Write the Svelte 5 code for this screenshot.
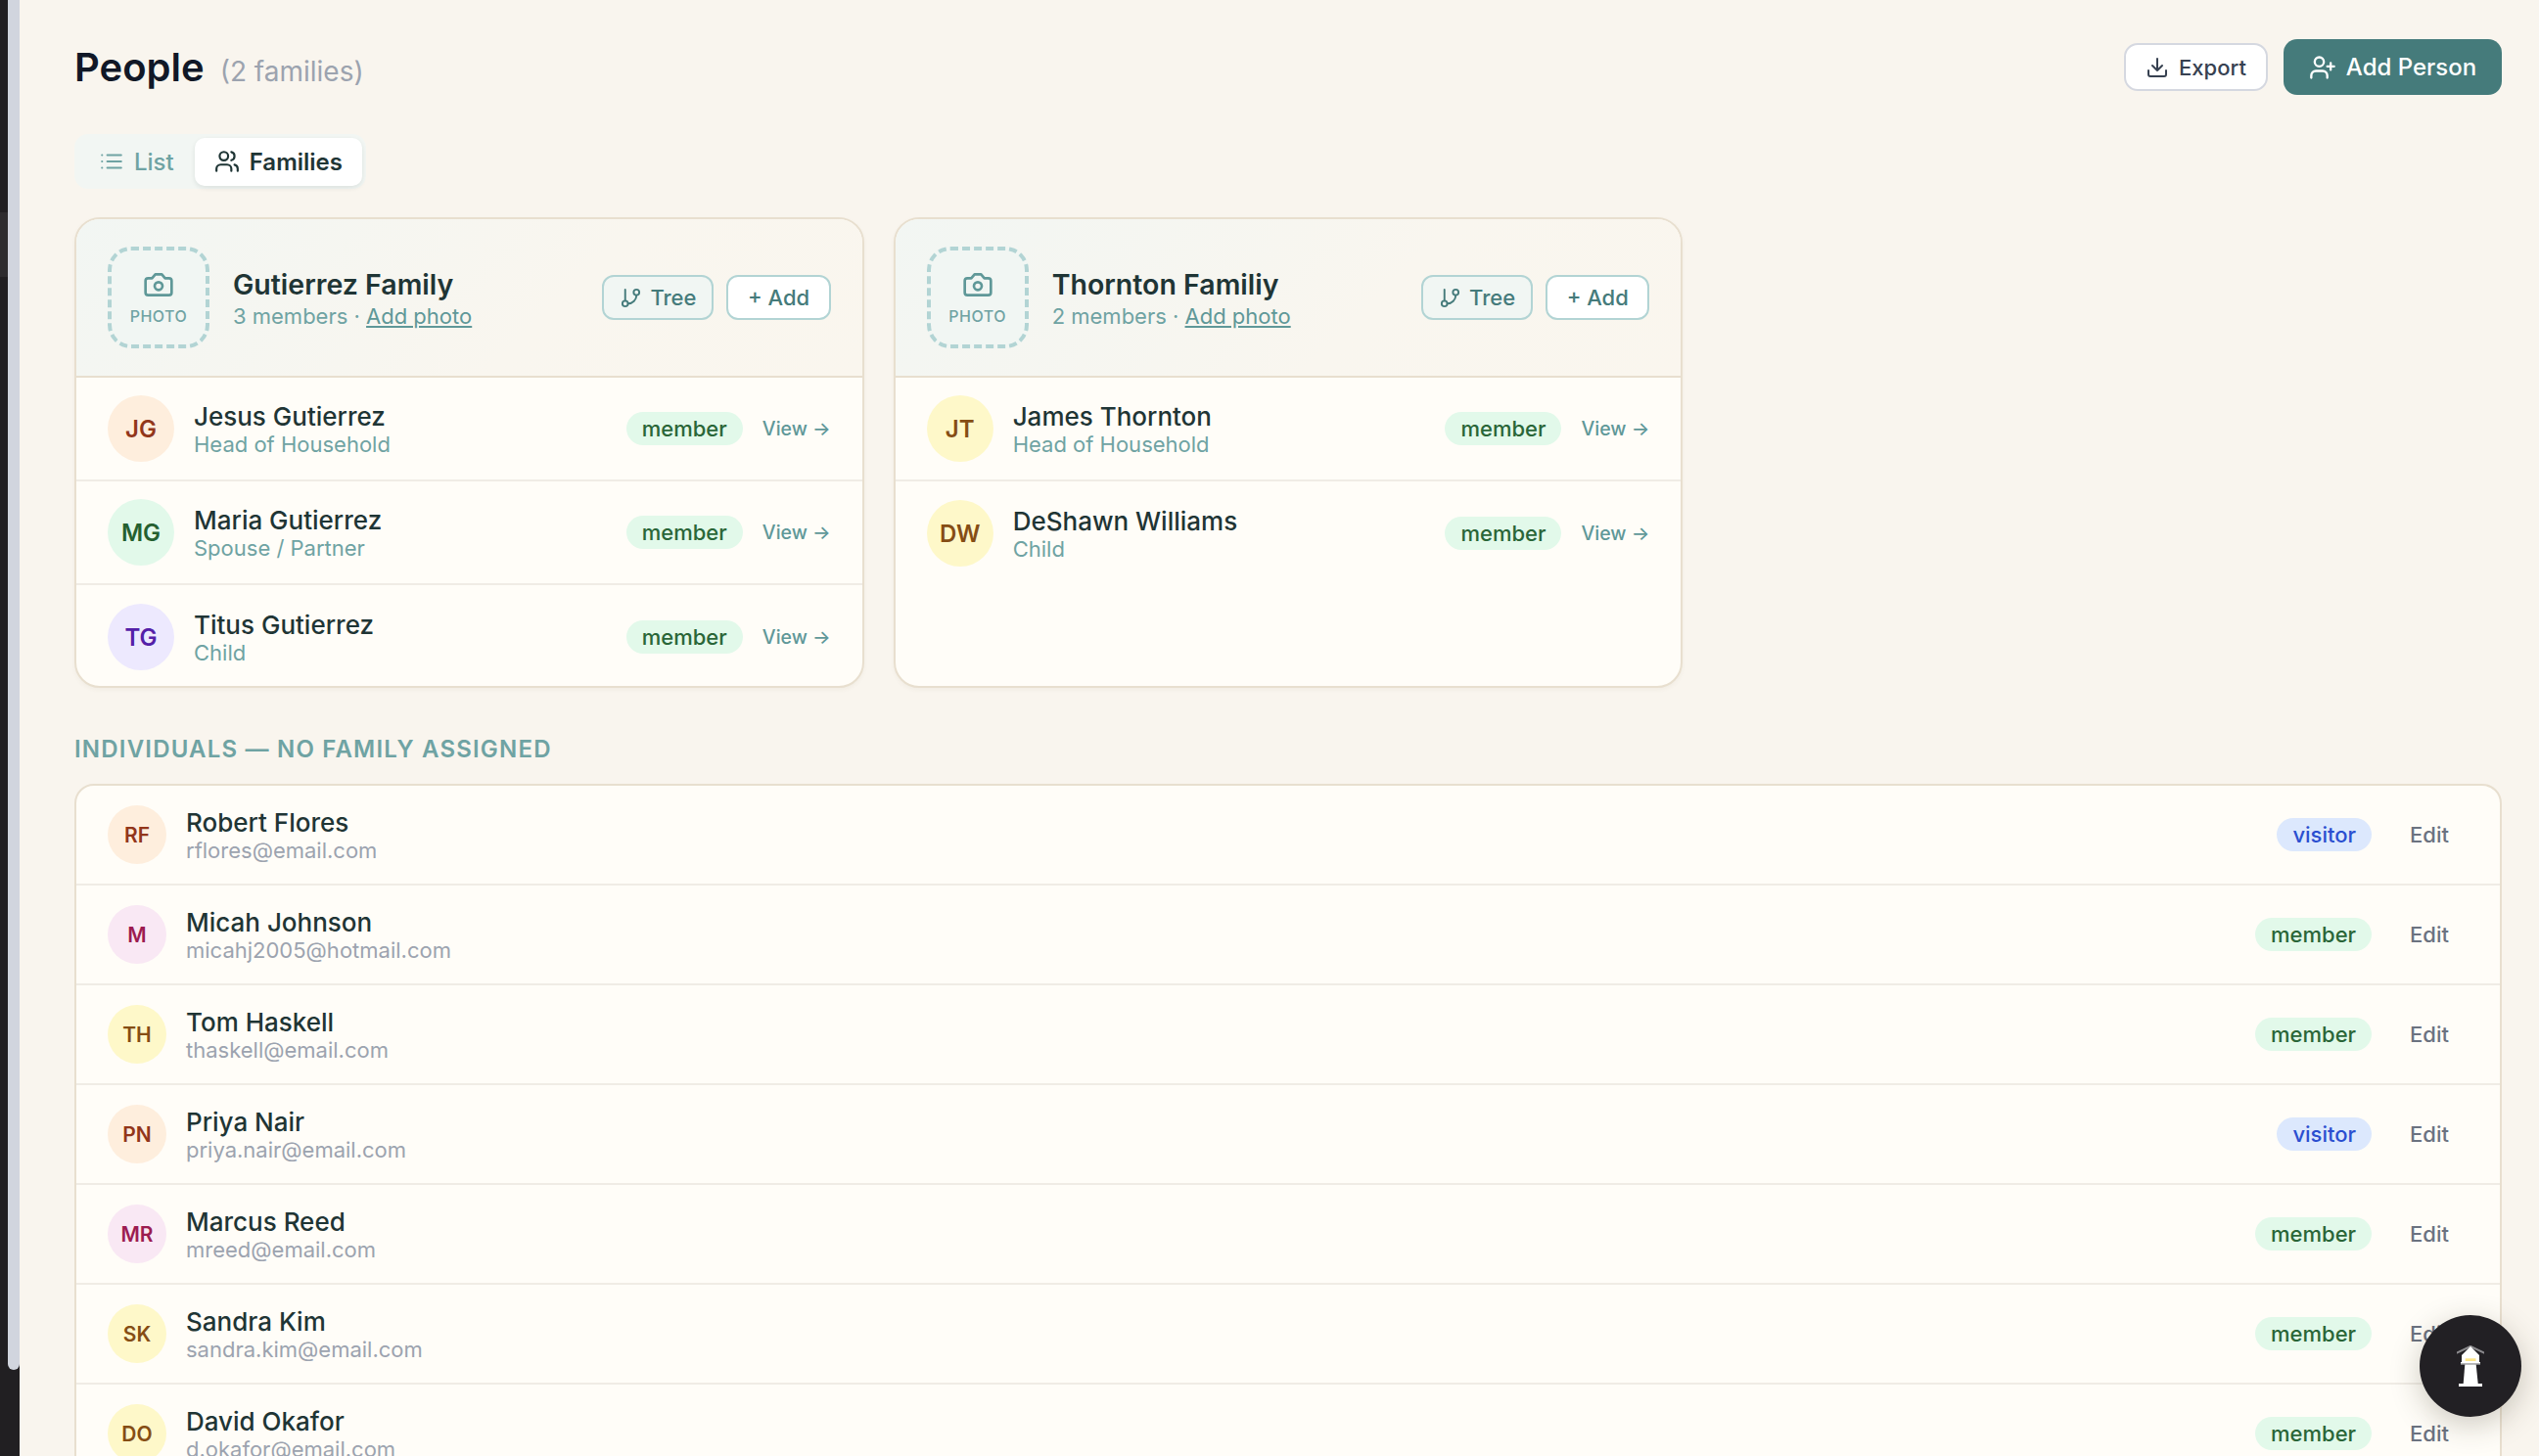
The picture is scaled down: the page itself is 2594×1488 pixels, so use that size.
<script>
  const families = [
    {
      name: 'Gutierrez Family',
      count: '3 members',
      members: [
        { initials: 'JG', tone: 'peach', name: 'Jesus Gutierrez', role: 'Head of Household' },
        { initials: 'MG', tone: 'green', name: 'Maria Gutierrez', role: 'Spouse / Partner' },
        { initials: 'TG', tone: 'violet', name: 'Titus Gutierrez', role: 'Child' }
      ]
    },
    {
      name: 'Thornton Familiy',
      count: '2 members',
      members: [
        { initials: 'JT', tone: 'yellow', name: 'James Thornton', role: 'Head of Household' },
        { initials: 'DW', tone: 'yellow', name: 'DeShawn Williams', role: 'Child' }
      ]
    }
  ];

  const individuals = [
    { initials: 'RF', tone: 'peach', name: 'Robert Flores', email: 'rflores@email.com', status: 'visitor' },
    { initials: 'M', tone: 'pink', name: 'Micah Johnson', email: 'micahj2005@hotmail.com', status: 'member' },
    { initials: 'TH', tone: 'yellow', name: 'Tom Haskell', email: 'thaskell@email.com', status: 'member' },
    { initials: 'PN', tone: 'peach', name: 'Priya Nair', email: 'priya.nair@email.com', status: 'visitor' },
    { initials: 'MR', tone: 'pink', name: 'Marcus Reed', email: 'mreed@email.com', status: 'member' },
    { initials: 'SK', tone: 'yellow', name: 'Sandra Kim', email: 'sandra.kim@email.com', status: 'member' },
    { initials: 'DO', tone: 'yellow', name: 'David Okafor', email: 'd.okafor@email.com', status: 'member' }
  ];
</script>

<div class="shell">
  <div class="rail"><div class="thumb"></div></div>

  <main>
    <header>
      <h1>People <span>(2 families)</span></h1>
      <div class="actions">
        <button class="export">
          <svg viewBox="0 0 24 24" width="24" height="24"><path d="M12 3v12M7 10l5 5 5-5M3 15v4a2 2 0 0 0 2 2h14a2 2 0 0 0 2-2v-4" /></svg>
          Export
        </button>
        <button class="add-person">
          <svg viewBox="0 0 24 24" width="28" height="28"><path d="M16 21v-2a4 4 0 0 0-4-4H6a4 4 0 0 0-4 4v2" /><circle cx="9" cy="7" r="4" /><path d="M19 8v6M22 11h-6" /></svg>
          Add Person
        </button>
      </div>
    </header>

    <div class="tabs">
      <button class="tab">
        <svg viewBox="0 0 24 24" width="26" height="26"><path d="M8 6h13M8 12h13M8 18h13M3 6h.01M3 12h.01M3 18h.01" /></svg>
        List
      </button>
      <button class="tab active">
        <svg viewBox="0 0 24 24" width="26" height="26"><path d="M16 21v-2a4 4 0 0 0-4-4H6a4 4 0 0 0-4 4v2" /><circle cx="9" cy="7" r="4" /><path d="M22 21v-2a4 4 0 0 0-3-3.87M16 3.13a4 4 0 0 1 0 7.75" /></svg>
        Families
      </button>
    </div>

    <section class="family-grid">
      {#each families as family}
        <article class="family">
          <div class="family-head">
            <div class="photo">
              <svg viewBox="0 0 24 24" width="32" height="32"><path d="M14.5 4h-5L7 7H4a2 2 0 0 0-2 2v9a2 2 0 0 0 2 2h16a2 2 0 0 0 2-2V9a2 2 0 0 0-2-2h-3l-2.5-3z" /><circle cx="12" cy="13" r="3" /></svg>
              <span>PHOTO</span>
            </div>
            <div class="family-info">
              <h2>{family.name}</h2>
              <p>{family.count} · <a href="#photo">Add photo</a></p>
            </div>
            <button class="mini tree">
              <svg viewBox="0 0 24 24" width="23" height="23"><path d="M6 3v12" /><circle cx="18" cy="6" r="3" /><circle cx="6" cy="18" r="3" /><path d="M18 9a9 9 0 0 1-9 9" /></svg>
              Tree
            </button>
            <button class="mini">+ Add</button>
          </div>
          {#each family.members as m}
            <div class="member">
              <div class="avatar big {m.tone}">{m.initials}</div>
              <div class="who">
                <div class="name">{m.name}</div>
                <div class="role">{m.role}</div>
              </div>
              <span class="badge member-badge">member</span>
              <span class="view">View →</span>
            </div>
          {/each}
        </article>
      {/each}
    </section>

    <h3>INDIVIDUALS — NO FAMILY ASSIGNED</h3>

    <section class="people">
      {#each individuals as p}
        <div class="person">
          <div class="avatar {p.tone}">{p.initials}</div>
          <div class="who">
            <div class="name">{p.name}</div>
            <div class="email">{p.email}</div>
          </div>
          <span class="badge {p.status === 'visitor' ? 'visitor-badge' : 'member-badge'}">{p.status}</span>
          <span class="edit">Edit</span>
        </div>
      {/each}
    </section>
  </main>

  <button class="fab" aria-label="Help">
    <svg viewBox="0 0 28 43" width="28" height="43">
      <path d="M0 7.700 14 1l14 6.700" fill="none" stroke="#8b8a8d" stroke-width="2" />
      <path d="M5 10 14 1l9 9v7H5z" fill="#fff" />
      <rect x="4" y="17" width="20" height="1.500" fill="#fff" />
      <rect x="4" y="18.500" width="20" height="1" fill="#d8d8d8" />
      <rect x="8.700" y="13.300" width="10.800" height="2.700" fill="#fde68a" />
      <path d="M8.300 19.500h11.400L21.700 39H6.700z" fill="#fff" />
      <rect x="2" y="39" width="24" height="3" fill="#fff" />
    </svg>
  </button>
</div>

<style>
  :global(body) {
    margin: 0;
    background: #f9f5ee;
    overflow: hidden;
  }

  .shell {
    display: flex;
    height: 1488px;
    overflow: hidden;
    position: relative;
    font-family: Inter, "Liberation Sans", sans-serif;
    color: #1f3535;
  }

  .rail {
    width: 20px;
    flex: none;
    background: linear-gradient(#211f22 217px, #2e2c2f 217px, #2e2c2f 283px, #211f22 283px);
  }

  .thumb {
    width: 12px;
    height: 1400px;
    margin-left: 8px;
    background: #d1d5de;
    border-radius: 0 0 6px 6px;
  }

  main {
    flex: 1;
    min-width: 0;
    padding: 40px 38px 0 56px;
  }

  header {
    display: flex;
    justify-content: space-between;
    align-items: center;
    height: 57px;
    margin-bottom: 40px;
  }

  h1 {
    margin: 0;
    font-size: 40px;
    font-weight: 600;
    color: #111827;
  }

  h1 span {
    margin-left: 6px;
    font-size: 28px;
    font-weight: 400;
    color: #9ca3af;
  }

  .actions {
    display: flex;
    align-items: center;
    gap: 16px;
  }

  button {
    font-family: inherit;
    cursor: pointer;
    display: inline-flex;
    align-items: center;
    justify-content: center;
  }

  svg {
    fill: none;
    stroke: currentColor;
    stroke-width: 2;
    stroke-linecap: round;
    stroke-linejoin: round;
    flex: none;
  }

  .export {
    width: 147px;
    height: 49px;
    gap: 10px;
    background: #fff;
    border: 2px solid #d5d8e0;
    border-radius: 14px;
    color: #374151;
    font-size: 22px;
    font-weight: 500;
  }

  .add-person {
    width: 223px;
    height: 57px;
    gap: 10px;
    background: #457b7b;
    border: none;
    border-radius: 14px;
    color: #fff;
    font-size: 24px;
    font-weight: 500;
  }

  .tabs {
    display: inline-flex;
    align-items: center;
    height: 56px;
    padding: 0 4px;
    gap: 0;
    box-sizing: border-box;
    background: #f2f6f3;
    border-radius: 14px;
    vertical-align: top;
  }

  .tab {
    height: 49px;
    gap: 10px;
    padding: 0 20px;
    background: none;
    border: none;
    border-radius: 10px;
    color: #6fa3a3;
    font-size: 24px;
    font-weight: 500;
  }

  .tab:first-child {
    padding: 0 21px;
  }

  .tab.active {
    background: #fff;
    color: #1f3535;
    font-weight: 600;
    box-shadow: 0 2px 5px rgba(31, 53, 53, 0.1);
  }

  .family-grid {
    display: grid;
    grid-template-columns: repeat(3, 1fr);
    gap: 30px;
    margin-top: 29px;
  }

  .family {
    box-sizing: border-box;
    height: 481px;
    background: #fffdf8;
    border: 2px solid #e8dfcf;
    border-radius: 26px;
    box-shadow: 0 2px 4px rgba(120, 100, 60, 0.06);
    overflow: hidden;
  }

  .family-head {
    display: flex;
    align-items: center;
    gap: 13px;
    box-sizing: border-box;
    height: 162px;
    padding: 0 32px;
    background: linear-gradient(135deg, #f2f6f3, #f9f6ef 60%, #faf6ee);
    border-bottom: 2px solid #e8dfcf;
  }

  .photo {
    box-sizing: border-box;
    width: 104px;
    height: 104px;
    flex: none;
    display: flex;
    flex-direction: column;
    align-items: center;
    justify-content: center;
    gap: 6px;
    margin-right: 11px;
    background: #f1f6f3;
    border: 4px dashed #b2d4d4;
    border-radius: 24px;
    color: #5f9898;
  }

  .photo span {
    font-size: 16px;
    font-weight: 500;
    letter-spacing: 0.5px;
    color: #6fa3a3;
  }

  .family-info {
    flex: 1;
    min-width: 0;
  }

  h2 {
    margin: 0 0 2px;
    font-size: 28.500px;
    font-weight: 600;
    color: #1f3535;
  }

  .family-info p {
    margin: 0;
    font-size: 22px;
    color: #6fa3a3;
    white-space: nowrap;
  }

  .family-info a {
    color: #5f9898;
    text-decoration: underline;
  }

  .mini {
    box-sizing: border-box;
    height: 46px;
    padding: 0 19.500px;
    gap: 8px;
    background: #fff;
    border: 2px solid #b2d4d4;
    border-radius: 12px;
    color: #457b7b;
    font-size: 22px;
    font-weight: 500;
    white-space: nowrap;
  }

  .mini.tree {
    padding: 0 16px;
    background: #f1f6f3;
  }

  .member {
    display: flex;
    align-items: center;
    box-sizing: border-box;
    height: 106px;
    padding: 0 32px;
    border-bottom: 2px solid #f0ece5;
  }

  .member .who {
    padding-top: 2px;
  }

  .family .member:last-child {
    border-bottom: none;
  }

  .avatar {
    width: 60px;
    height: 60px;
    flex: none;
    border-radius: 50%;
    display: flex;
    align-items: center;
    justify-content: center;
    font-size: 21px;
    font-weight: 600;
    margin-right: 20px;
  }

  .avatar.big {
    width: 68px;
    height: 68px;
    font-size: 24px;
    margin-right: 20px;
  }

  .peach { background: #feeedd; color: #92361a; }
  .green { background: #e2f9ea; color: #256030; }
  .violet { background: #ede9fe; color: #5420a8; }
  .yellow { background: #fef8c9; color: #854d14; }
  .pink { background: #f9e8f4; color: #9c1c50; }

  .who {
    flex: 1;
    min-width: 0;
  }

  .name {
    font-size: 26px;
    font-weight: 500;
    line-height: 31px;
    color: #1f3535;
  }

  .role {
    font-size: 22px;
    line-height: 27px;
    color: #6fa3a3;
  }

  .email {
    font-size: 22px;
    line-height: 26px;
    color: #9ca3af;
  }

  .badge {
    height: 34px;
    line-height: 34px;
    padding: 0 16px;
    border-radius: 17px;
    font-size: 22px;
    font-weight: 500;
  }

  .member-badge {
    background: #e2f9ea;
    color: #2a6638;
  }

  .visitor-badge {
    background: #dce8fd;
    color: #2b4fd0;
  }

  .view {
    margin-left: 20px;
    font-size: 19.500px;
    font-weight: 500;
    color: #5f9898;
  }

  h3 {
    margin: 48px 0 20px;
    font-size: 24px;
    line-height: 30px;
    font-weight: 600;
    letter-spacing: 1.2px;
    color: #6fa3a3;
  }

  .people {
    background: #fffdf8;
    border: 2px solid #e8dfcf;
    border-radius: 20px;
  }

  .person {
    display: flex;
    align-items: center;
    box-sizing: border-box;
    height: 102px;
    padding: 0 52px 0 32px;
    border-bottom: 2px solid #f0ece5;
  }

  .edit {
    margin-left: 39px;
    font-size: 22px;
    font-weight: 500;
    color: #6b7280;
  }

  .fab {
    position: absolute;
    left: 2472px;
    top: 1344px;
    width: 104px;
    height: 104px;
    padding: 0;
    border: none;
    border-radius: 50%;
    background: #222024;
    box-shadow: 0 8px 30px rgba(60, 50, 30, 0.25);
  }

  .fab svg {
    stroke: none;
  }
</style>
